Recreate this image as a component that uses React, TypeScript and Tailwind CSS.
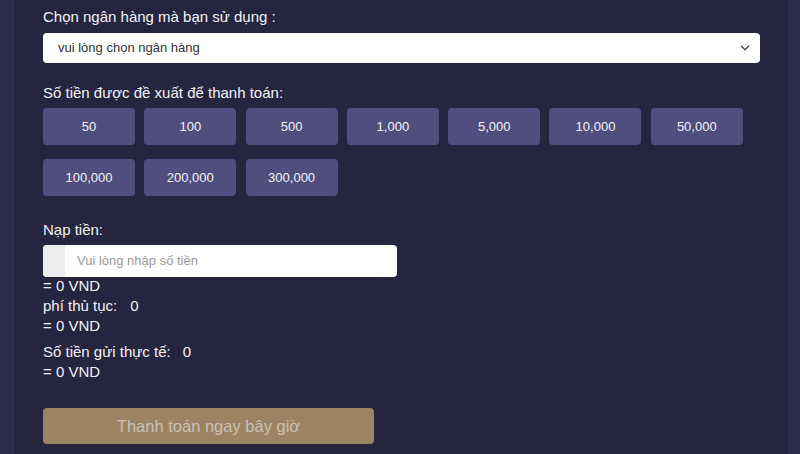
import React from 'react';
import { ChevronDown } from 'lucide-react';

const amounts = ['50', '100', '500', '1,000', '5,000', '10,000', '50,000', '100,000', '200,000', '300,000'];

const App = () => {
  return (
    <div className="flex h-[454px] w-[800px] overflow-hidden text-white" style={{ fontFamily: '"Liberation Sans", Arial, sans-serif' }}>
      <div className="w-[14px] bg-[#2d2d4e]" />
      <div className="flex-1 bg-[#252540] pl-[29px] pt-[7px]">
        <div className="text-[15px] leading-[20px] text-[#f2f2f5]">Chọn ngân hàng mà bạn sử dụng :</div>
        <div className="mt-[6px] flex h-[30px] w-[717px] items-center justify-between rounded-[4px] bg-white pl-[15px] pr-[8px]">
          <span className="text-[13px] text-[#333]">vui lòng chọn ngân hàng</span>
          <ChevronDown className="h-[14px] w-[14px] text-[#444]" strokeWidth={2.2} />
        </div>

        <div className="mt-[20px] text-[15px] leading-[20px] text-[#f2f2f5]">Số tiền được đề xuất để thanh toán:</div>
        <div className="mt-[5px] grid grid-cols-[repeat(7,92px)] gap-x-[9.3px] gap-y-[14px]">
          {amounts.map((a) => (
            <button key={a} className="flex h-[37px] items-center justify-center rounded-[4px] bg-[#4f4e7e] text-[13px] text-[#f4f4f8]">
              {a}
            </button>
          ))}
        </div>

        <div className="mt-[24px] text-[15px] leading-[20px] text-[#f2f2f5]">Nạp tiền:</div>
        <div className="mt-[5px] flex h-[32px] w-[354px] overflow-hidden rounded-[4px] bg-white">
          <div className="w-[22px] bg-[#ededed]" />
          <div className="flex items-center pl-[12px] text-[13px] text-[#9a9a9a]">Vui lòng nhập số tiền</div>
        </div>

        <div className="text-[15px] leading-[20px] text-[#f2f2f5]">
          <div className="-mt-[1px]">= 0 VND</div>
          <div>
            phí thủ tục:<span className="ml-[13px]">0</span>
          </div>
          <div>= 0 VND</div>
          <div className="mt-[6px]">
            Số tiền gửi thực tế:<span className="ml-[12px]">0</span>
          </div>
          <div>= 0 VND</div>
        </div>

        <button className="mt-[26px] flex h-[36px] w-[331px] items-center justify-center rounded-[4px] bg-[#9c8462] text-[16.5px] text-[#c9c0b6]">
          Thanh toán ngay bây giờ
        </button>
      </div>
      <div className="w-[12px] bg-[#2d2d4e]" />
    </div>
  );
};

export default App;
